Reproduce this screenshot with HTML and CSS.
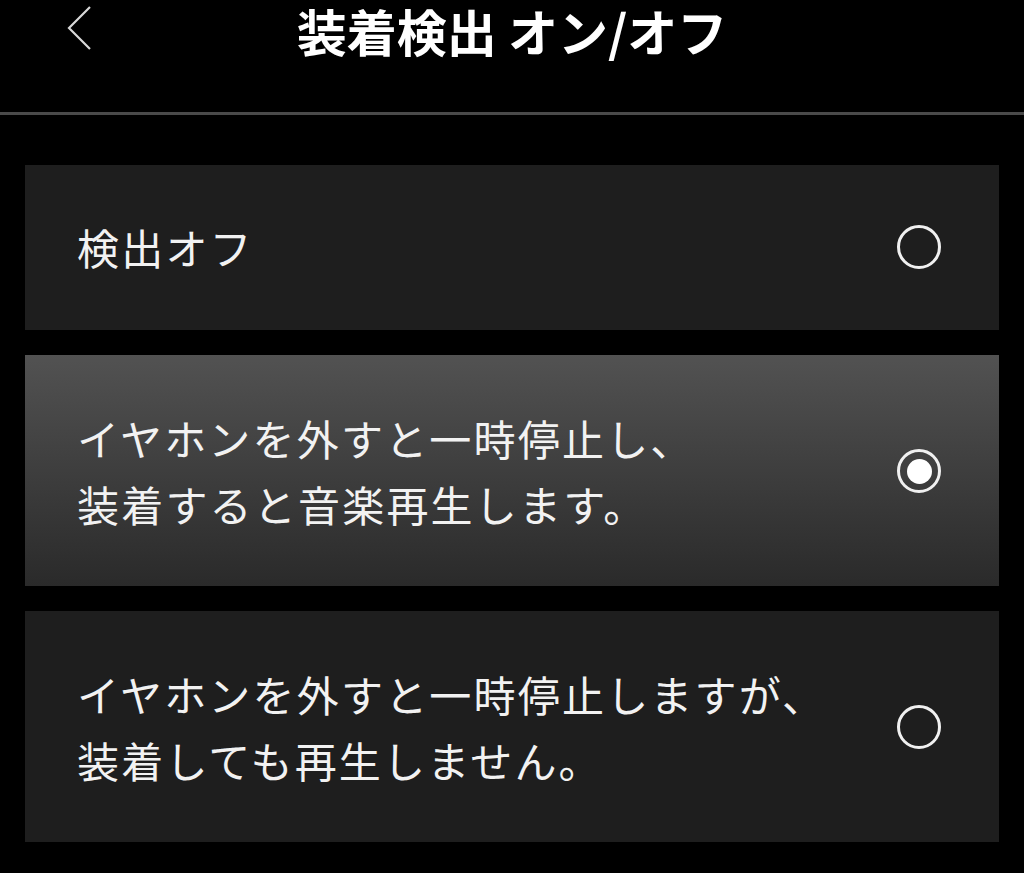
FILE: index.html
```html
<!DOCTYPE html>
<html lang="ja">
<head>
    <meta charset="UTF-8">
    <meta name="viewport" content="width=device-width, initial-scale=1.0">
    <title>装着検出 オン/オフ</title>
    <link rel="stylesheet" href="styles.css">
</head>
<body>
    <div class="header">
        <button class="back" aria-label="戻る">
            <svg width="26" height="46" viewBox="0 0 26 46">
                <polyline points="23,2 2,23 23,44" fill="none" stroke="#d8d8d8" stroke-width="2.2"/>
            </svg>
        </button>
        <h1 class="title">装着検出 オン/オフ</h1>
        <div></div>
    </div>

    <div class="options">
        <div class="option">
            <div class="label">検出オフ</div>
            <span class="radio"></span>
        </div>
        <div class="option selected">
            <div class="label">イヤホンを外すと一時停止し、<br>装着すると音楽再生します。</div>
            <span class="radio"></span>
        </div>
        <div class="option">
            <div class="label">イヤホンを外すと一時停止しますが、<br>装着しても再生しません。</div>
            <span class="radio"></span>
        </div>
    </div>
</body>
</html>
```

FILE: styles.css
```css
body {
    margin: 0;
    background-color: #000;
    color: #f2f2f2;
    font-family: "Noto Sans CJK JP", "Noto Sans", sans-serif;
}

.header {
    display: grid;
    grid-template-columns: 1fr auto 1fr;
    align-items: start;
    height: 112px;
    border-bottom: 3px solid #4a4a4a;
}

.back {
    justify-self: start;
    margin: 5px 0 0 67px;
    padding: 0;
    border: none;
    background: none;
    cursor: pointer;
}

.back svg {
    display: block;
}

.title {
    margin: 0;
    font-size: 50px;
    line-height: 60px;
    font-weight: bold;
    color: #fff;
}

.options {
    display: flex;
    flex-direction: column;
    gap: 25px;
    padding: 50px 25px 0 25px;
}

.option {
    display: flex;
    align-items: center;
    justify-content: space-between;
    padding: 50px 58px 49px 52px;
    background-color: #1e1e1e;
    cursor: pointer;
}

.option:first-child {
    padding-top: 49px;
    padding-bottom: 50px;
}

.option.selected {
    background: linear-gradient(to bottom, #525252, #2a2a2a);
}

.label {
    font-size: 42px;
    line-height: 66px;
    letter-spacing: 2.2px;
}

.radio {
    flex-shrink: 0;
    box-sizing: border-box;
    width: 44px;
    height: 44px;
    border: 3px solid #f0f0f0;
    border-radius: 50%;
    display: flex;
    align-items: center;
    justify-content: center;
}

.selected .radio::after {
    content: "";
    width: 25px;
    height: 25px;
    border-radius: 50%;
    background-color: #fff;
}
```
